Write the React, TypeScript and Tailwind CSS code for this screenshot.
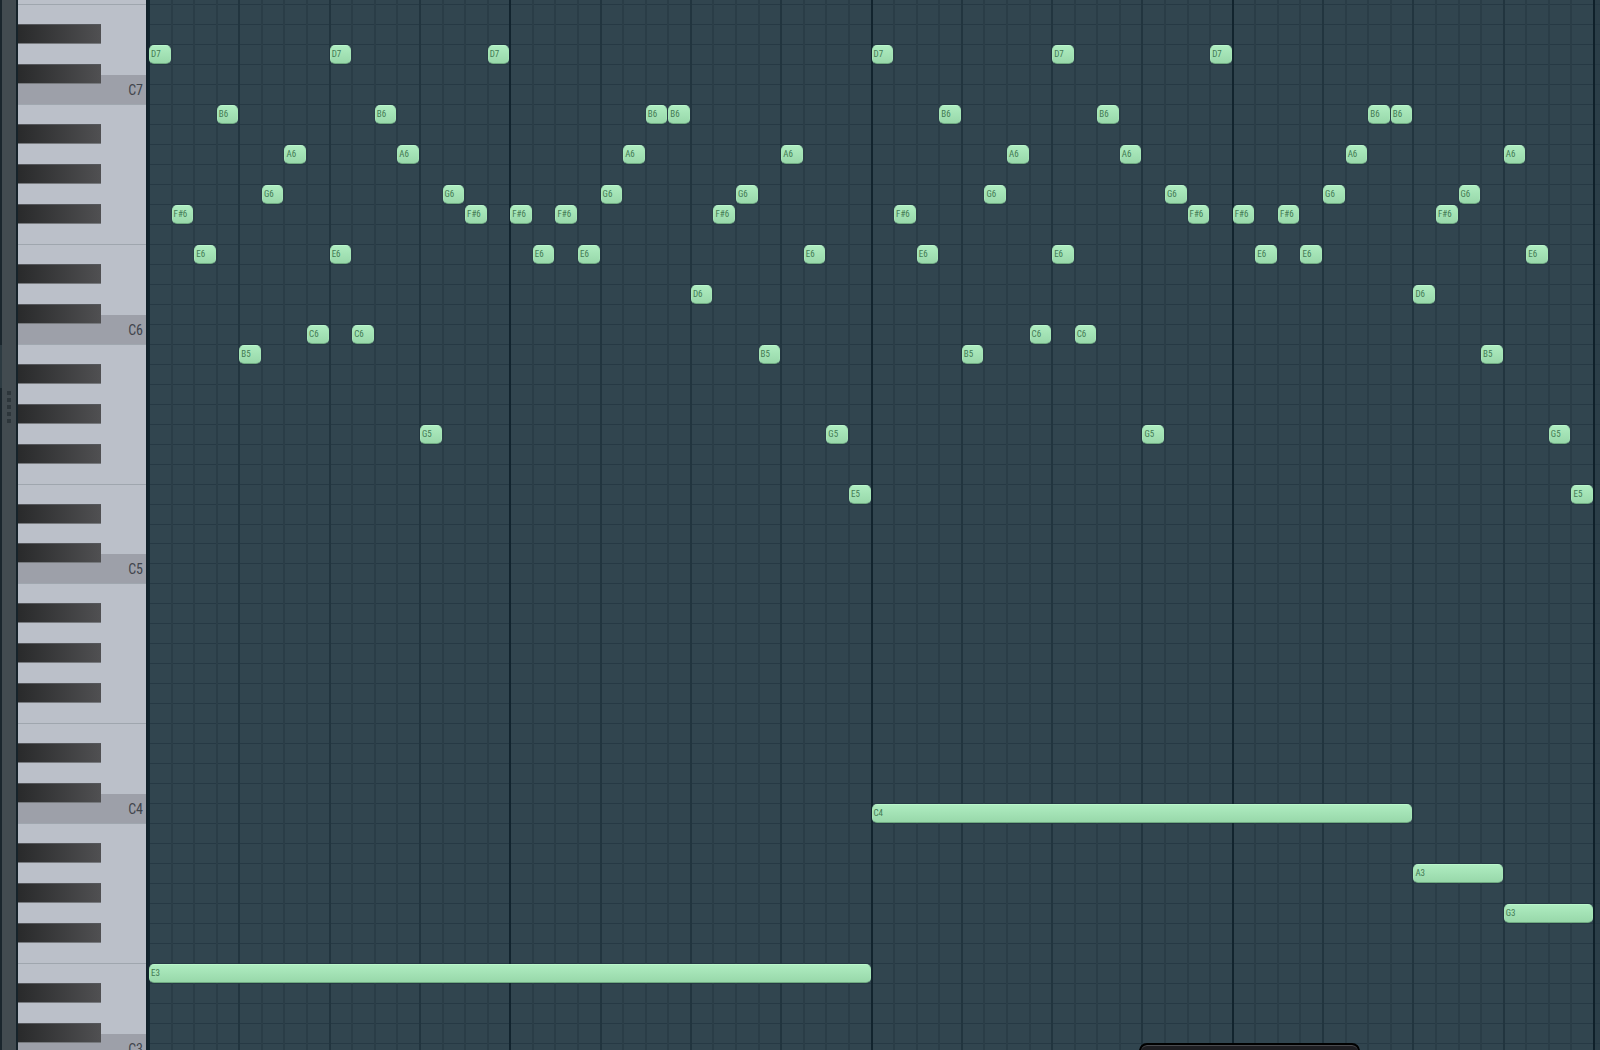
import React from 'react';
import clsx from 'clsx';

type Note = { pitch: string; start: number; length?: number };

const NAMES = ['C', 'C#', 'D', 'D#', 'E', 'F', 'F#', 'G', 'G#', 'A', 'A#', 'B'];
const STEPS = 64;

// F7 at the top down to C3 at the bottom
const PITCHES: string[] = [];
for (let midi = 101; midi >= 48; midi--) {
  PITCHES.push(`${NAMES[midi % 12]}${Math.floor(midi / 12) - 1}`);
}

// The same 32 step phrase is played twice
const PHRASE: Note[] = [
  { pitch: 'D7', start: 0 },
  { pitch: 'F#6', start: 1 },
  { pitch: 'E6', start: 2 },
  { pitch: 'B6', start: 3 },
  { pitch: 'B5', start: 4 },
  { pitch: 'G6', start: 5 },
  { pitch: 'A6', start: 6 },
  { pitch: 'C6', start: 7 },
  { pitch: 'D7', start: 8 },
  { pitch: 'E6', start: 8 },
  { pitch: 'C6', start: 9 },
  { pitch: 'B6', start: 10 },
  { pitch: 'A6', start: 11 },
  { pitch: 'G5', start: 12 },
  { pitch: 'G6', start: 13 },
  { pitch: 'F#6', start: 14 },
  { pitch: 'D7', start: 15 },
  { pitch: 'F#6', start: 16 },
  { pitch: 'E6', start: 17 },
  { pitch: 'F#6', start: 18 },
  { pitch: 'E6', start: 19 },
  { pitch: 'G6', start: 20 },
  { pitch: 'A6', start: 21 },
  { pitch: 'B6', start: 22 },
  { pitch: 'B6', start: 23 },
  { pitch: 'D6', start: 24 },
  { pitch: 'F#6', start: 25 },
  { pitch: 'G6', start: 26 },
  { pitch: 'B5', start: 27 },
  { pitch: 'A6', start: 28 },
  { pitch: 'E6', start: 29 },
  { pitch: 'G5', start: 30 },
  { pitch: 'E5', start: 31 },
];

const BASS: Note[] = [
  { pitch: 'E3', start: 0, length: 32 },
  { pitch: 'C4', start: 32, length: 24 },
  { pitch: 'A3', start: 56, length: 4 },
  { pitch: 'G3', start: 60, length: 4 },
];

const NOTES: Note[] = [
  ...PHRASE,
  ...PHRASE.map((n) => ({ ...n, start: n.start + 32 })),
  ...BASS,
];

const Splitter: React.FC = () => (
  <div className="flex w-[18px] shrink-0 border-r-2 border-[#16232a] bg-[#424b50]">
    <div className="w-[2px] bg-[#1a262d] pt-[361px]">
      <div className="h-[43px] bg-[#2c3a41]" />
    </div>
    <div className="mx-auto mt-[407px] flex flex-col gap-[3px]">
      {[0, 1, 2, 3, 4].map((i) => (
        <span key={i} className="size-1 bg-[#2d363b]" />
      ))}
    </div>
  </div>
);

const Keyboard: React.FC = () => (
  <div className="grid h-full w-32 shrink-0 grid-rows-[repeat(54,minmax(0,1fr))] bg-[#bbc0c9]">
    {PITCHES.map((pitch, i) => {
      const isBlack = pitch.includes('#');
      const isC = pitch.startsWith('C') && !isBlack;
      const isCSharp = pitch.startsWith('C#');
      return (
        <div
          key={pitch}
          className={clsx(
            'relative flex',
            (pitch.startsWith('E') || pitch.startsWith('B')) && i > 0 && 'border-t border-[#9fa6ae]',
            isC && 'bg-[#9da0a9]'
          )}
        >
          {isBlack && (
            <span className="w-[83px] border-y border-t-[#55575b] border-b-[#76797d] bg-linear-to-r from-[#292a2b] to-[#505052]" />
          )}
          {isCSharp && <span className="mt-auto h-[9px] flex-1 bg-[#9da0a9]" />}
          {isC && (
            <span className="absolute right-[3px] bottom-1 font-['Roboto_Condensed','Liberation_Sans_Narrow','Roboto',sans-serif] text-sm leading-5 text-[#41454d]">
              {pitch}
            </span>
          )}
        </div>
      );
    })}
  </div>
);

const GridLines: React.FC = () => (
  <>
    <div className="col-start-1 row-start-1 mr-[5px] bg-[#31454f]" />
    <div className="col-start-1 row-start-1 grid grid-rows-[repeat(54,minmax(0,1fr))]">
      {PITCHES.map((pitch) => (
        <span key={pitch} className="border-t border-[#263944]" />
      ))}
    </div>
    <div className="col-start-1 row-start-1 mr-[5px] -ml-px grid grid-cols-[repeat(64,minmax(0,1fr))] border-r-2 border-[#0f202a]">
      {Array.from({ length: STEPS }, (_, step) => (
        <span
          key={step}
          className={clsx(
            'border-l-2',
            step % 16 === 0 ? 'border-[#12242e]' : step % 4 === 0 ? 'border-[#22353f]' : 'border-[#2a3d47]'
          )}
        />
      ))}
    </div>
  </>
);

const NoteGrid: React.FC = () => (
  <div className="grid h-full min-w-0 flex-1 bg-[#2b3e48]">
    <GridLines />
    <div className="col-start-1 row-start-1 mr-[6px] grid grid-cols-[repeat(64,minmax(0,1fr))] grid-rows-[repeat(54,minmax(0,1fr))]">
      {NOTES.map((note) => (
        <button
          key={`${note.pitch}-${note.start}`}
          type="button"
          style={{
            gridColumn: `${note.start + 1} / span ${note.length ?? 1}`,
            gridRow: PITCHES.indexOf(note.pitch) + 1,
          }}
          className="mt-px mr-px flex min-w-0 items-center rounded-[5px] border border-t-[#bbf6cc] border-x-[#a5e5b6] border-b-[#6fa981] bg-linear-to-b from-[#aeecc0] to-[#98d8aa] pl-px font-['Roboto_Condensed','Liberation_Sans_Narrow','Roboto',sans-serif] text-[9px] leading-none text-[#437a53]"
        >
          {note.pitch}
        </button>
      ))}
    </div>
  </div>
);

const App: React.FC = () => {
  return (
    <div className="relative h-screen overflow-hidden bg-[#31454f]">
      <div className="-mt-4 flex h-[1079px]">
        <Splitter />
        <Keyboard />
        <div className="w-[3px] shrink-0 bg-[#12222b]" />
        <NoteGrid />
      </div>

      {/* Top edge of the floating hint panel */}
      <div className="absolute -bottom-4 left-[71.2%] h-[23px] w-[221px] rounded-lg border-2 border-black bg-[#1e1e22] shadow-[inset_0_1px_0_#4a4a4e]" />
    </div>
  );
};

export default App;
